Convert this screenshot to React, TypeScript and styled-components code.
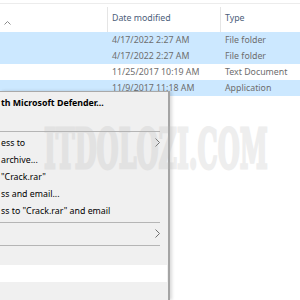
import React from "react";
import styled, { createGlobalStyle } from "styled-components";

type FileRowType = {
  date: string;
  type: string;
  selected: boolean;
};

type MenuEntry =
  | { kind: "item"; label?: string; bold?: boolean; submenu?: boolean; hover?: boolean }
  | { kind: "separator" };

const files: FileRowType[] = [
  { date: "4/17/2022 2:27 AM", type: "File folder", selected: true },
  { date: "4/17/2022 2:27 AM", type: "File folder", selected: true },
  { date: "11/25/2017 10:19 AM", type: "Text Document", selected: false },
  { date: "11/9/2017 11:18 AM", type: "Application", selected: true },
];

const menu: MenuEntry[] = [
  { kind: "item", label: "th Microsoft Defender...", bold: true },
  { kind: "item" },
  { kind: "separator" },
  { kind: "item", label: "ess to", submenu: true },
  { kind: "item", label: "archive..." },
  { kind: "item", label: "\"Crack.rar\"" },
  { kind: "item", label: "ss and email..." },
  { kind: "item", label: "ss to \"Crack.rar\" and email" },
  { kind: "separator" },
  { kind: "item", submenu: true },
  { kind: "separator" },
  { kind: "item" },
  { kind: "item", hover: true },
  { kind: "item" },
];

const Chevron: React.FC = () => (
  <svg width="5" height="9" viewBox="0 0 5 9">
    <polyline points="0.5,0.5 4.5,4.5 0.5,8.5" fill="none" stroke="#707070" strokeWidth="1" />
  </svg>
);

const SortArrow: React.FC = () => (
  <svg width="7" height="4" viewBox="0 0 7 4">
    <polyline points="0.5,3.5 3.5,0.5 6.5,3.5" fill="none" stroke="#8a8a8a" strokeWidth="1" />
  </svg>
);

export default function App() {
  return (
    <>
      <GlobalStyle />
      <SScreen>
        <STopStrip />
        <SHeaderRow>
          <SNameHeader>
            <SortArrow />
          </SNameHeader>
          <SHeaderCell>Date modified</SHeaderCell>
          <SHeaderCell>Type</SHeaderCell>
        </SHeaderRow>
        {files.map((f, i) => (
          <SFileRow key={i} $selected={f.selected}>
            <SCell />
            <SCell>{f.date}</SCell>
            <SCell>{f.type}</SCell>
          </SFileRow>
        ))}

        <SMenu>
          {menu.map((m, i) =>
            m.kind === "separator" ? (
              <SSeparator key={i} />
            ) : (
              <SMenuItem key={i} $bold={m.bold} $hover={m.hover}>
                <span>{m.label}</span>
                {m.submenu && <Chevron />}
              </SMenuItem>
            )
          )}
        </SMenu>

        <SWatermark>ITDOLOZI.COM</SWatermark>
      </SScreen>
    </>
  );
}

const GlobalStyle = createGlobalStyle`
  html, body {
    margin: 0;
    padding: 0;
    background: #fff;
  }
`;

const SScreen = styled.div`
  position: relative;
  width: 300px;
  height: 300px;
  overflow: hidden;
  background: #fff;
  font-family: "Noto Sans", "Liberation Sans", sans-serif;
`;

const STopStrip = styled.div`
  height: 3px;
  border-bottom: 1px solid #ececec;
`;

const SHeaderRow = styled.div`
  display: grid;
  grid-template-columns: 107px 113px 1fr;
  height: 28px;
`;

const SNameHeader = styled.div`
  padding: 4px 0 0 4px;
`;

const SHeaderCell = styled.div`
  margin-top: 3px;
  padding: 5px 0 0 4px;
  border-left: 1px solid #e5e5e5;
  font-size: 8.8px;
  line-height: 12px;
  color: #4c607a;
  white-space: nowrap;
`;

const SFileRow = styled.div<{ $selected: boolean }>`
  display: grid;
  grid-template-columns: 107px 113px 1fr;
  height: 16px;
  background: ${(p) => (p.$selected ? "#cce8ff" : "#fff")};
`;

const SCell = styled.div`
  padding-left: 5px;
  font-size: 8.8px;
  line-height: 16px;
  color: #6d6d6d;
  white-space: nowrap;
`;

const SMenu = styled.div`
  position: absolute;
  top: 91px;
  left: 0;
  width: 168px;
  bottom: 0;
  padding-top: 2px;
  background: #f0f0f0;
  border-top: 1px solid #a9a9a9;
  border-right: 2px solid #a4a4a4;
  box-shadow: 2px 0 3px rgba(0, 0, 0, 0.15);
`;

const SMenuItem = styled.div<{ $bold?: boolean; $hover?: boolean }>`
  display: flex;
  align-items: center;
  justify-content: space-between;
  height: 17px;
  margin-right: 1px;
  padding: 0 7px 0 1px;
  font-size: 8.8px;
  font-weight: ${(p) => (p.$bold ? 700 : 400)};
  color: #000;
  white-space: nowrap;
  background: ${(p) => (p.$hover ? "#fff" : "transparent")};
`;

const SSeparator = styled.div`
  display: flex;
  align-items: center;
  height: 6px;
  padding-right: 8px;

  &::after {
    content: "";
    flex: 1;
    height: 1px;
    background: #b5b5b5;
  }
`;

const SWatermark = styled.div`
  position: absolute;
  top: 121px;
  left: 44px;
  font-family: "DejaVu Serif", serif;
  font-weight: 700;
  font-size: 55px;
  line-height: 1;
  color: #b4b4b4;
  -webkit-text-stroke: 3px #b4b4b4;
  opacity: 0.22;
  white-space: nowrap;
  transform: scaleX(0.46);
  transform-origin: left top;
  pointer-events: none;
`;
